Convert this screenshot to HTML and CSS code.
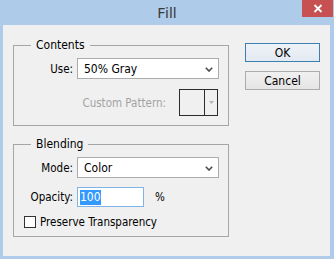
FILE: index.html
```html
<!DOCTYPE html>
<html>
<head>
<meta charset="utf-8">
<link rel="stylesheet" href="styles.css">
</head>
<body>
<div class="window">
  <div class="titlebar">
    <span></span>
    <span class="title">Fill</span>
    <span class="close"><svg width="10" height="9" viewBox="0 0 10 9"><path d="M1.5 1 L8.5 8 M8.5 1 L1.5 8" stroke="#fff" stroke-width="1.8" fill="none"/></svg></span>
  </div>
  <div class="client">
    <div class="groups">
      <fieldset class="group contents">
        <legend>Contents</legend>
        <div class="row">
          <label class="lbl">Use:</label>
          <div class="select"><span>50% Gray</span><svg class="chev" width="8" height="5" viewBox="0 0 8 5"><path d="M0.8 0.8 L4 4 L7.2 0.8" stroke="#4a4a4a" stroke-width="1.6" fill="none"/></svg></div>
        </div>
        <div class="pattern-row">
          <span class="disabled">Custom Pattern:</span>
          <div class="pattern"><span class="swatch"></span><span class="pat-arrow"><svg width="5" height="3" viewBox="0 0 5 3"><path d="M0 0 H5 L2.5 3 Z" fill="#b4b4b4"/></svg></span></div>
        </div>
      </fieldset>
      <fieldset class="group blending">
        <legend>Blending</legend>
        <div class="row">
          <label class="lbl">Mode:</label>
          <div class="select"><span>Color</span><svg class="chev" width="8" height="5" viewBox="0 0 8 5"><path d="M0.8 0.8 L4 4 L7.2 0.8" stroke="#4a4a4a" stroke-width="1.6" fill="none"/></svg></div>
        </div>
        <div class="row opacity-row">
          <label class="lbl">Opacity:</label>
          <div class="opacity">
            <div class="input"><span class="sel">100</span></div>
            <span class="pct">%</span>
          </div>
        </div>
        <div class="check-row">
          <span class="checkbox"></span>
          <span>Preserve Transparency</span>
        </div>
      </fieldset>
    </div>
    <div class="buttons">
      <div class="btn default">OK</div>
      <div class="btn">Cancel</div>
    </div>
  </div>
</div>
</body>
</html>
```
FILE: styles.css
```css
* { box-sizing: border-box; }
html, body { margin: 0; padding: 0; }
body {
  font-family: "DejaVu Sans Condensed", "DejaVu Sans", sans-serif;
  font-size: 11.5px;
  color: #000;
}
.window {
  width: 334px;
  height: 259px;
  background: #aecbea;
  display: flex;
  flex-direction: column;
  overflow: hidden;
}
.titlebar {
  height: 25px;
  display: grid;
  grid-template-columns: 1fr auto 1fr;
  align-items: start;
  flex: none;
}
.title {
  font-family: "Noto Sans", sans-serif;
  font-size: 15px;
  line-height: 24px;
  color: #3a3a3a;
}
.close {
  justify-self: end;
  width: 31px;
  height: 17px;
  margin-right: 1px;
  background: #c75050;
  display: flex;
  align-items: center;
  justify-content: center;
}
.client {
  flex: 1;
  margin: 0 4px 3px 3px;
  background: #f0f0f0;
  display: flex;
  padding: 13px 0 0 10px;
  gap: 16px;
}
.groups {
  display: flex;
  flex-direction: column;
  gap: 11px;
}
.group {
  margin: 0;
  width: 216px;
  min-width: 0;
  border: 1px solid #a6a6a6;
  padding: 6px 9px 9px 0;
}
.group legend {
  margin-left: 17px;
  padding: 0 5px;
  line-height: 14px;
  font-size: 12px;
}
.row {
  display: grid;
  grid-template-columns: 59px 142px;
  column-gap: 4px;
  align-items: center;
}
.lbl { justify-self: end; }
.select {
  height: 21px;
  background: #fff;
  border: 1px solid #acacac;
  display: flex;
  align-items: center;
  justify-content: space-between;
  padding: 0 5px 0 6px;
  font-size: 12px;
}
.chev { margin-top: 1px; }
.pattern-row {
  margin-top: 10px;
  display: flex;
  justify-content: flex-end;
  align-items: center;
  gap: 13px;
  padding-right: 1px;
}
.disabled { color: #a3a3a3; }
.pattern {
  width: 39px;
  height: 27px;
  border: 1px solid #2b2b2b;
  display: flex;
}
.swatch {
  width: 25px;
  border-right: 1px solid #2b2b2b;
}
.pat-arrow {
  flex: 1;
  display: flex;
  align-items: center;
  justify-content: center;
}
.opacity-row { margin-top: 9px; }
.opacity {
  display: flex;
  align-items: center;
  gap: 11px;
}
.input {
  width: 67px;
  height: 20px;
  background: #fff;
  border: 1px solid #7eb4ea;
  display: flex;
  align-items: center;
  padding-left: 2px;
  font-size: 12px;
}
.sel {
  background: #3399ff;
  color: #fff;
  line-height: 15px;
}
.check-row {
  margin-top: 8px;
  padding-left: 10px;
  display: flex;
  align-items: center;
  gap: 4px;
  line-height: 14px;
}
.checkbox {
  width: 12px;
  height: 12px;
  background: #fff;
  border: 1px solid #333;
}
.blending { padding-bottom: 7px; }
.buttons {
  padding-top: 5px;
  display: flex;
  flex-direction: column;
  gap: 9px;
}
.btn {
  width: 75px;
  height: 19px;
  border: 1px solid #acacac;
  background: linear-gradient(#f0f0f0, #e5e5e5);
  display: flex;
  align-items: center;
  justify-content: center;
  font-size: 12px;
}
.btn.default { border-color: #3c7fb1; background: linear-gradient(#eef3f8, #e2e9f0); }
```
